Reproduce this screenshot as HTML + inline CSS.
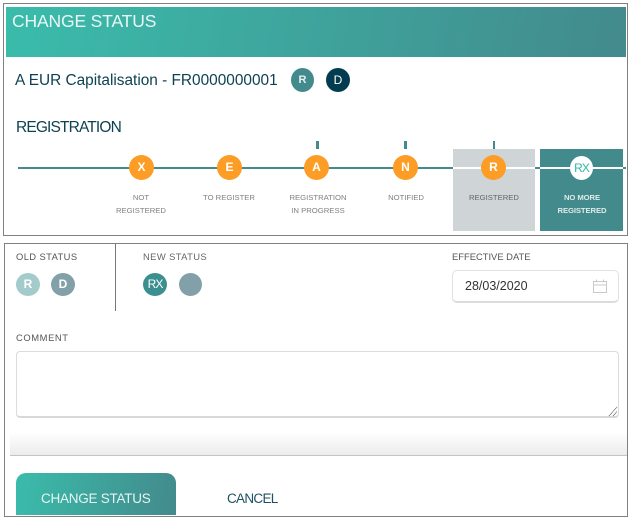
<!DOCTYPE html>
<html><head><meta charset="utf-8"><style>
html,body{margin:0;padding:0;background:#fff}
body{width:633px;height:521px;position:relative;overflow:hidden;font-family:"Liberation Sans",sans-serif}
.a{position:absolute;box-sizing:border-box}
.t{position:absolute;white-space:nowrap;line-height:1}
.c{position:absolute;border-radius:50%;text-align:center;color:#fff;font-weight:400}
.l{position:absolute;text-align:center;font-size:7.7px;line-height:13px;color:#808080;white-space:nowrap;transform:translateX(-50%)}
.o{width:25px;height:25px;line-height:25px;background:#fd9d25;font-size:12px;font-weight:bold;top:155px}
.k{position:absolute;width:3px;height:8px;top:141px;background:#438a8c}
</style></head><body>
<div class="a" style="left:3px;top:3px;width:625px;height:233px;border:1px solid #808080"></div>
<div class="a" style="left:6px;top:7px;width:620px;height:50px;background:linear-gradient(100deg,#3abcab,#438a8c)"></div>
<div class="t" style="left:12px;top:13px;font-size:17.5px;letter-spacing:-.15px;color:#e9f7f5">CHANGE STATUS</div>
<div class="t" style="left:15px;top:73px;font-size:15.4px;color:#0e4152">A EUR Capitalisation - FR0000000001</div>
<div class="c" style="left:291px;top:68px;width:23px;height:24px;line-height:24px;background:#438a8c;font-size:11px;font-weight:bold;color:#e4f0f0">R</div>
<div class="c" style="left:326px;top:68px;width:24px;height:24px;line-height:24px;background:#033c4f;font-size:12px">D</div>
<div class="t" style="left:16px;top:120px;font-size:15.5px;letter-spacing:-.85px;color:#0e4152">REGISTRATION</div>

<div class="a" style="left:453px;top:149px;width:82px;height:82px;background:#cfd4d6"></div>
<div class="a" style="left:540px;top:149px;width:83px;height:82px;background:#438a8c"></div>
<div class="a" style="left:18px;top:167px;width:435px;height:2px;background:#438a8c"></div>
<div class="a" style="left:453px;top:167px;width:82px;height:2px;background:#fff"></div>
<div class="a" style="left:535px;top:167px;width:5px;height:2px;background:#438a8c"></div>
<div class="a" style="left:540px;top:167px;width:83px;height:2px;background:#fff"></div>
<div class="a" style="left:623px;top:167px;width:3px;height:2px;background:#438a8c"></div>
<div class="k" style="left:316px"></div><div class="k" style="left:404px"></div><div class="k" style="left:493px;width:2px"></div>

<div class="c o" style="left:129px">X</div>
<div class="c o" style="left:217px">E</div>
<div class="c o" style="left:304px">A</div>
<div class="c o" style="left:393px">N</div>
<div class="c o" style="left:481px">R</div>
<div class="c" style="left:570px;top:156px;width:23px;height:24px;line-height:24px;background:#fff;color:#2fb8a8;font-size:12px;letter-spacing:-1px">RX</div>

<div class="l" style="left:141px;top:191px">NOT<br>REGISTERED</div>
<div class="l" style="left:229px;top:191px">TO REGISTER</div>
<div class="l" style="left:318px;top:191px">REGISTRATION<br>IN PROGRESS</div>
<div class="l" style="left:406px;top:191px">NOTIFIED</div>
<div class="l" style="left:494px;top:191px;color:#666">REGISTERED</div>
<div class="l" style="left:582px;top:191px;color:#dfeaea;font-weight:bold;letter-spacing:-.1px">NO MORE<br>REGISTERED</div>

<div class="a" style="left:4px;top:243px;width:624px;height:274px;border:1px solid #808080"></div>
<div class="t" style="left:16px;top:252px;font-size:9.4px;letter-spacing:.4px;color:#555">OLD STATUS</div>
<div class="c" style="left:16px;top:273px;width:24px;height:23px;line-height:23px;background:#a3cbcb;font-size:12px;font-weight:bold">R</div>
<div class="c" style="left:51px;top:273px;width:24px;height:23px;line-height:23px;background:#81a0a7;font-size:12px;font-weight:bold">D</div>
<div class="a" style="left:115px;top:244px;width:1px;height:67px;background:#777"></div>
<div class="t" style="left:143px;top:252px;font-size:9.4px;letter-spacing:.4px;color:#666">NEW STATUS</div>
<div class="c" style="left:143px;top:273px;width:24px;height:23px;line-height:23px;background:#3c8f8f;font-size:12px;letter-spacing:-1px">RX</div>
<div class="c" style="left:179px;top:273px;width:23px;height:23px;background:#81a0a7"></div>

<div class="t" style="left:452px;top:252px;font-size:9.4px;color:#555">EFFECTIVE DATE</div>
<div class="a" style="left:452px;top:270px;width:167px;height:33px;border:1px solid #e2e2e2;border-bottom:2px solid #dcdcdc;border-radius:5px;background:#fff"></div>
<div class="t" style="left:465px;top:280px;font-size:12.5px;color:#333">28/03/2020</div>
<svg class="a" style="left:592px;top:279px" width="16" height="15" viewBox="0 0 16 15" fill="none" stroke="#c9c9c9" stroke-width="1"><path d="M1.5 2.5h13v11h-13zM1.5 6h13M4.5 .5v3M11.5 .5v3"/></svg>

<div class="t" style="left:16px;top:333px;font-size:9.4px;letter-spacing:.6px;color:#555">COMMENT</div>
<div class="a" style="left:16px;top:351px;width:603px;height:67px;border:1px solid #dcdcdc;border-bottom:2px solid #d8d8d8;border-radius:4px;background:#fff"></div>
<svg class="a" style="left:608px;top:406px" width="10" height="11" viewBox="0 0 10 11" stroke="#666" stroke-width="1" stroke-dasharray="1 .6"><path d="M1 10L9 1M5 10L9 5.5"/></svg>

<div class="a" style="left:10px;top:432px;width:617px;height:24px;background:linear-gradient(#fff,#ececec);border-bottom:1px solid #c4c4c4"></div>
<div class="a" style="left:16px;top:473px;width:160px;height:42px;border-radius:10px 10px 0 0;background:linear-gradient(100deg,#3abcab,#438a8c)"></div>
<div class="t" style="left:41px;top:492px;font-size:13.5px;letter-spacing:-.25px;color:#e6f5f3">CHANGE STATUS</div>
<div class="t" style="left:227px;top:492px;font-size:13.5px;letter-spacing:-.7px;color:#1d5064">CANCEL</div>
</body></html>
